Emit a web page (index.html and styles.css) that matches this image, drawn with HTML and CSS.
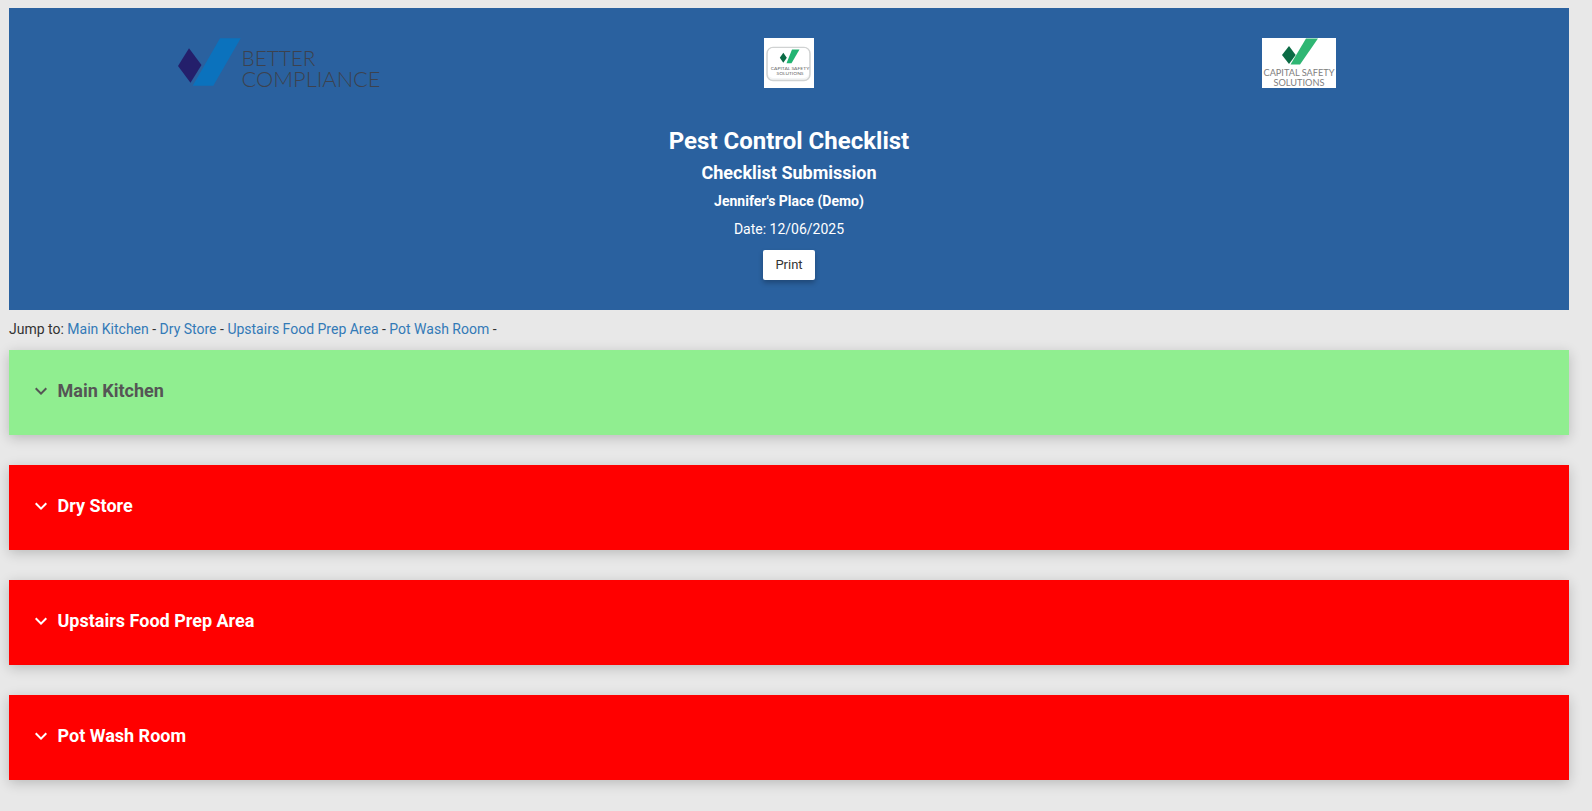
FILE: index.html
```html
<!DOCTYPE html>
<html lang="en">
<head>
<meta charset="utf-8">
<title>Pest Control Checklist</title>
<link rel="stylesheet" href="styles.css">
</head>
<body>
<header class="banner">
  <div class="logos">
    <div class="logo-cell">
      <svg class="logo" width="203" height="50" viewBox="0 0 203 50">
        <path d="M0 28 L11 10.3 L23.5 27 L12.500 44.700 Z" fill="#241f6b"/>
        <path d="M42 0.3 L62.700 0.3 L35.300 47.700 L14.700 47.700 Z" fill="#0b72bd"/>
        <text class="lg-text" x="63.500" y="27.700" textLength="74" lengthAdjust="spacingAndGlyphs">BETTER</text>
        <text class="lg-text" x="63.500" y="48.500" textLength="139" lengthAdjust="spacingAndGlyphs">COMPLIANCE</text>
      </svg>
    </div>
    <div class="logo-cell">
      <svg class="logo logo-white" width="50" height="50" viewBox="0 0 50 50">
        <rect x="3" y="9.500" width="43" height="33" rx="6" fill="#f4f5f5" stroke="#d0d2d2" stroke-width="1.500"/>
        <rect x="4" y="10" width="41" height="30" rx="5" fill="#fff"/>
        <path d="M15.800 19.700 L19.300 14.700 L22.800 19.700 L19.300 24.800 Z" fill="#0b6b45"/>
        <path d="M28 11.500 L35.500 11.500 L27.500 25.300 L22.500 25.300 Z" fill="#22b573"/>
        <text class="cs-small" x="26" y="32" text-anchor="middle" textLength="38.500" lengthAdjust="spacingAndGlyphs">CAPITAL SAFETY</text>
        <text class="cs-small" x="26" y="37" text-anchor="middle" textLength="27" lengthAdjust="spacingAndGlyphs">SOLUTIONS</text>
      </svg>
    </div>
    <div class="logo-cell">
      <svg class="logo logo-white" width="74" height="50" viewBox="0 0 74 50">
        <path d="M20 17 L27 8 L33.700 17 L27 26 Z" fill="#0b6b45"/>
        <path d="M44 0.500 L56 0.500 L38 26.500 L28.500 26.500 Z" fill="#2fb673"/>
        <text class="cs-large" x="37" y="38" text-anchor="middle" textLength="71" lengthAdjust="spacingAndGlyphs">CAPITAL SAFETY</text>
        <text class="cs-large" x="37" y="48" text-anchor="middle" textLength="51" lengthAdjust="spacingAndGlyphs">SOLUTIONS</text>
      </svg>
    </div>
  </div>
  <h1 class="title">Pest Control Checklist</h1>
  <h2 class="subtitle">Checklist Submission</h2>
  <h3 class="venue">Jennifer's Place (Demo)</h3>
  <p class="date">Date: 12/06/2025</p>
  <button class="print" type="button">Print</button>
</header>

<nav class="jump">Jump to: <a href="#main-kitchen">Main Kitchen</a> - <a href="#dry-store">Dry Store</a> - <a href="#upstairs">Upstairs Food Prep Area</a> - <a href="#pot-wash">Pot Wash Room</a> -</nav>

<section class="panel panel-pass" id="main-kitchen">
  <svg class="chevron" width="24" height="24" viewBox="0 0 24 24"><path d="M7.410 8.590 12 13.170l4.590-4.580L18 10l-6 6-6-6z"/></svg>
  <span class="panel-title">Main Kitchen</span>
</section>
<section class="panel panel-fail" id="dry-store">
  <svg class="chevron" width="24" height="24" viewBox="0 0 24 24"><path d="M7.410 8.590 12 13.170l4.590-4.580L18 10l-6 6-6-6z"/></svg>
  <span class="panel-title">Dry Store</span>
</section>
<section class="panel panel-fail" id="upstairs">
  <svg class="chevron" width="24" height="24" viewBox="0 0 24 24"><path d="M7.410 8.590 12 13.170l4.590-4.580L18 10l-6 6-6-6z"/></svg>
  <span class="panel-title">Upstairs Food Prep Area</span>
</section>
<section class="panel panel-fail" id="pot-wash">
  <svg class="chevron" width="24" height="24" viewBox="0 0 24 24"><path d="M7.410 8.590 12 13.170l4.590-4.580L18 10l-6 6-6-6z"/></svg>
  <span class="panel-title">Pot Wash Room</span>
</section>
</body>
</html>
```
FILE: styles.css
```css
* { box-sizing: border-box; }
html, body { margin: 0; height: 100%; }
body {
  background: #e8e8e8;
  color: #333;
  font-family: Roboto, "Liberation Sans", sans-serif;
  font-size: 14px;
  padding: 8px 23px 0 9px;
  overflow: hidden;
}
.banner {
  background: #2a619f;
  color: #fff;
  height: 302px;
  padding: 30px 15px 0;
  display: flex;
  flex-direction: column;
  align-items: center;
  text-align: center;
}
.logos {
  display: grid;
  grid-template-columns: repeat(3, 1fr);
  width: 100%;
  height: 50px;
  margin-bottom: 37px;
}
.logo-cell { display: flex; justify-content: center; }
.logo { display: block; overflow: visible; }
.logo-white { background: #fff; }
.lg-text { font-family: Lato, sans-serif; font-weight: 300; font-size: 21px; fill: #3c424e; }
.cs-small { font-family: Lato, sans-serif; font-size: 4.500px; fill: #666; }
.cs-large { font-family: Lato, sans-serif; font-size: 10px; fill: #808080; }
.title { margin: 0; font-size: 24px; font-weight: 700; line-height: 32px; }
.subtitle { margin: 0; font-size: 18px; font-weight: 700; line-height: 32px; }
.venue { margin: 0; font-size: 14px; font-weight: 700; line-height: 25px; }
.date { margin: 0; font-size: 14px; line-height: 30px; }
.print {
  margin-top: 6px;
  width: 52px;
  height: 30px;
  padding: 0 0 2px;
  border: 0;
  border-radius: 2px;
  background: #fff;
  color: #333;
  font: 400 13px Roboto, sans-serif;
  box-shadow: 0 3px 5px rgba(0, 0, 0, 0.25);
}
.jump { height: 40px; line-height: 38px; }
.jump a { color: #337ab7; text-decoration: none; }
.panel {
  height: 85px;
  margin-bottom: 30px;
  padding: 0 24px 4px 20px;
  display: flex;
  align-items: center;
  gap: 4.500px;
  box-shadow: 0 3px 12px rgba(0, 0, 0, 0.2);
}
.panel-title { font-size: 18px; font-weight: 700; }
.chevron { flex: none; fill: currentColor; }
.panel-pass { background: #90ee90; color: #555; }
.panel-fail { background: #f00; color: #fff; }
```
